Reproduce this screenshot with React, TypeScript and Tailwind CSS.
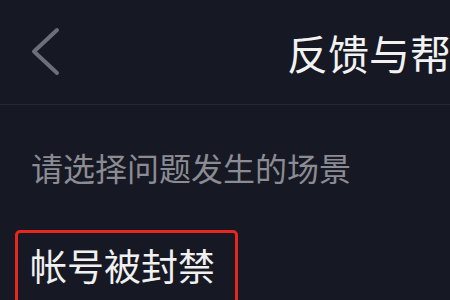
import React from "react";

export default function App() {
  return (
    <div
      className="w-[450px] h-[300px] overflow-hidden bg-[#161823]"
      style={{ fontFamily: '"Noto Sans CJK SC", "Noto Sans", sans-serif' }}
    >
      <div className="h-[105px] border-b border-[#262833] flex items-center">
        <div className="ml-[30px] w-[32px] h-[52px] flex items-center">
          <svg width="32" height="52" viewBox="0 0 32 52" fill="none">
            <path
              d="M27 4 L4 25.5 L27 47"
              stroke="#6d6e78"
              strokeWidth="4"
              strokeLinecap="round"
              strokeLinejoin="round"
            />
          </svg>
        </div>
        <div className="ml-[225px] whitespace-nowrap text-[41px] leading-none text-[#f2f2f2]">
          反馈与帮助
        </div>
      </div>
      <div className="pt-[46px]">
        <div className="pl-[31px] text-[32px] leading-none text-[#8b8c93] whitespace-nowrap">
          请选择问题发生的场景
        </div>
        <div className="mt-[47px] ml-[15px] w-[223px] h-[100px] border-[3px] border-[#e6261f] rounded-[5px] pl-[12px] pt-[14px]">
          <div className="text-[37px] leading-none text-[#f0f0f0] whitespace-nowrap">
            帐号被封禁
          </div>
        </div>
      </div>
    </div>
  );
}
